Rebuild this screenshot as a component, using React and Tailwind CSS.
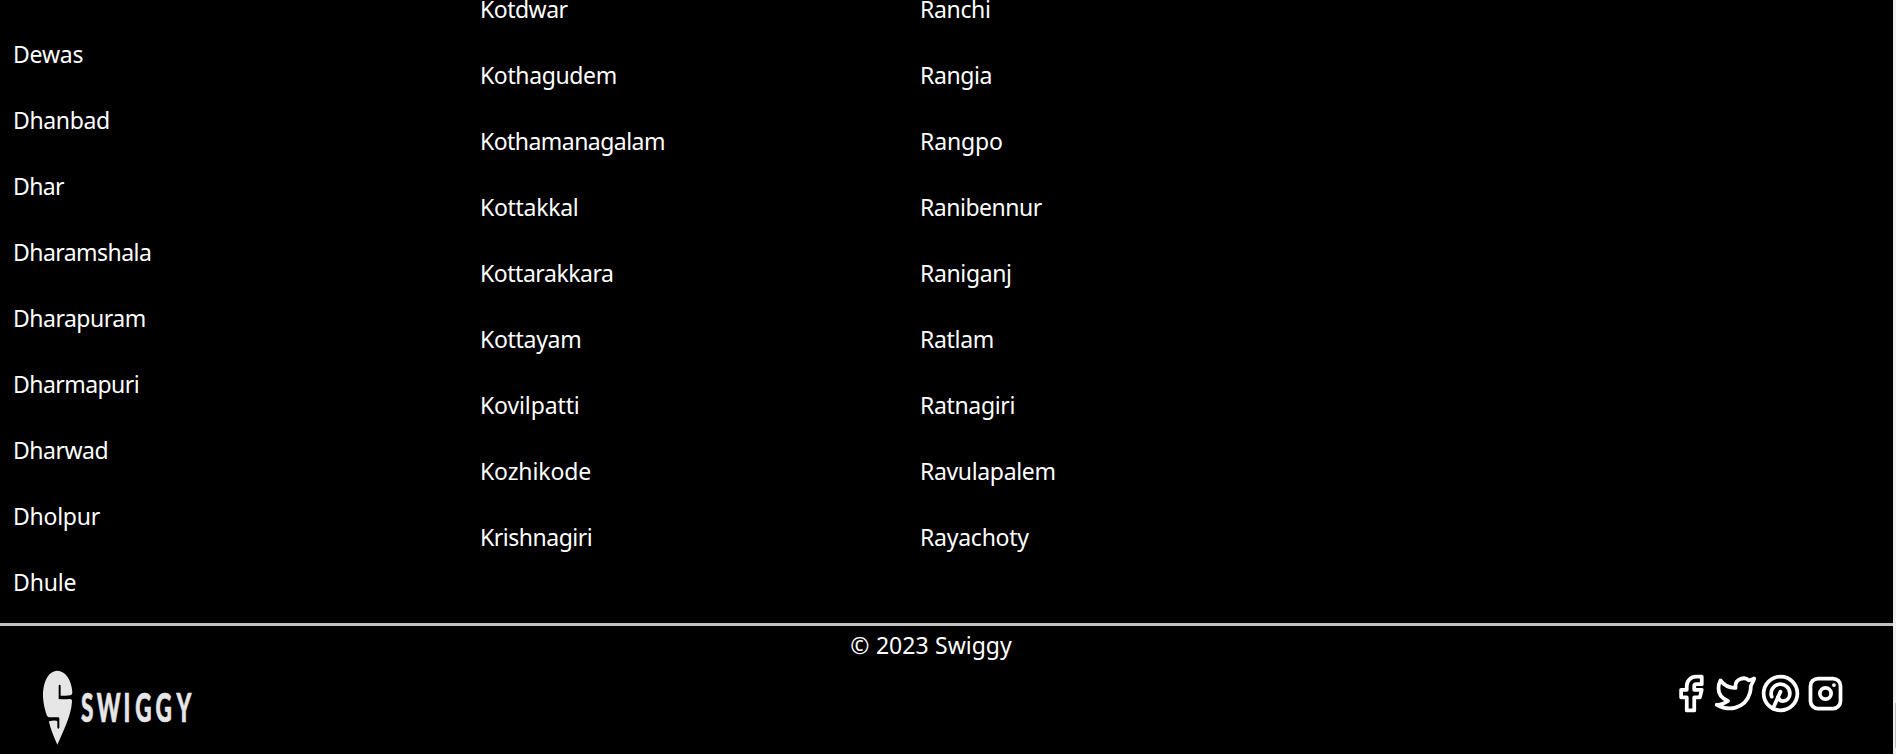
import { TbBrandFacebook, TbBrandTwitter, TbBrandPinterest, TbBrandInstagram } from "react-icons/tb";

// Each entry is a city name with its letter spacing in pixels.
const columns = [
  {
    className: "pt-[21px]",
    cities: [
      ["Dewas", -0.2], ["Dhanbad", -0.35], ["Dhar", -0.6], ["Dharamshala", -0.55], ["Dharapuram", -0.5],
      ["Dharmapuri", -0.55], ["Dharwad", -0.5], ["Dholpur", -0.25], ["Dhule", -0.15],
    ],
  },
  {
    className: "-mt-6",
    cities: [
      ["Kotdwar", -0.5], ["Kothagudem", -0.38], ["Kothamanagalam", -0.54], ["Kottakkal", -0.3], ["Kottarakkara", -0.46],
      ["Kottayam", -0.3], ["Kovilpatti", -0.12], ["Kozhikode", -0.12], ["Krishnagiri", -0.48],
    ],
  },
  {
    className: "-mt-6",
    cities: [
      ["Ranchi", -0.34], ["Rangia", -0.4], ["Rangpo", -0.14], ["Ranibennur", -0.48], ["Raniganj", -0.37],
      ["Ratlam", -0.3], ["Ratnagiri", -0.34], ["Ravulapalem", -0.35], ["Rayachoty", -0.25],
    ],
  },
];

const socials = [
  ["Facebook", TbBrandFacebook],
  ["Twitter", TbBrandTwitter],
  ["Pinterest", TbBrandPinterest],
  ["Instagram", TbBrandInstagram],
];

function Logo() {
  return (
    <svg width="160" height="84" viewBox="0 0 160 84" fill="#e6e6e6" aria-label="Swiggy">
      <path
        transform="scale(0.33333)"
        d="M58 14C82 14 101 42 103 78C103 84 101 87 96 88C88 90 78 89 68 89V60Q68 56 65 56Q62 56 62 60V99Q80 101 94 99Q102 98 102 104C101 132 92 164 58 236C48 214 38 190 33 168Q33 165 37 165Q46 163 54 164Q58 164 58 168V184Q58 188 61 188Q64 188 64 184V157Q64 154 60 154H36Q29 154 27 149C20 130 14 104 15 80C17 42 34 14 58 14Z"
      />
      <text
        transform="scale(0.57 1)"
        x="75.4 103.3 150 170.6 206 242.8"
        y="55.8"
        stroke="#e6e6e6"
        strokeWidth="0.7"
        className="font-['Lato',sans-serif] text-[39.5px] font-black"
      >
        SWIGGY
      </text>
    </svg>
  );
}

function Scrollbar() {
  return (
    <div className="flex w-[3px] justify-end bg-[#f1f1f1] pt-[703px]">
      <div className="h-[45px] w-px bg-[#c1c1c1]" />
    </div>
  );
}

export default function App() {
  return (
    <div className="flex h-[754px] overflow-hidden bg-black font-['Noto_Sans',sans-serif] text-[23px] text-white">
      <main className="flex flex-1 flex-col">
        <section className="grid h-[623px] grid-cols-[467px_440px_1fr] pl-[13px]">
          {columns.map(({ className, cities }) => (
            <ul key={cities[0][0]} className={className}>
              {cities.map(([name, spacing]) => (
                <li key={name} className="leading-[66px]" style={{ letterSpacing: `${spacing}px` }}>
                  {name}
                </li>
              ))}
            </ul>
          ))}
        </section>
        <footer className="flex-1 border-t-[3px] border-[#c0c0c0]">
          <p className="pr-[31px] text-center leading-[38px] [word-spacing:0.5px]">© 2023 Swiggy</p>
          <div className="flex items-start justify-between pt-0.5 pr-[45px] pl-[38px]">
            <Logo />
            <nav className="flex pt-[5px]">
              {socials.map(([name, Icon]) => (
                <a key={name} aria-label={name}>
                  <Icon size={45} />
                </a>
              ))}
            </nav>
          </div>
        </footer>
      </main>
      <Scrollbar />
    </div>
  );
}
